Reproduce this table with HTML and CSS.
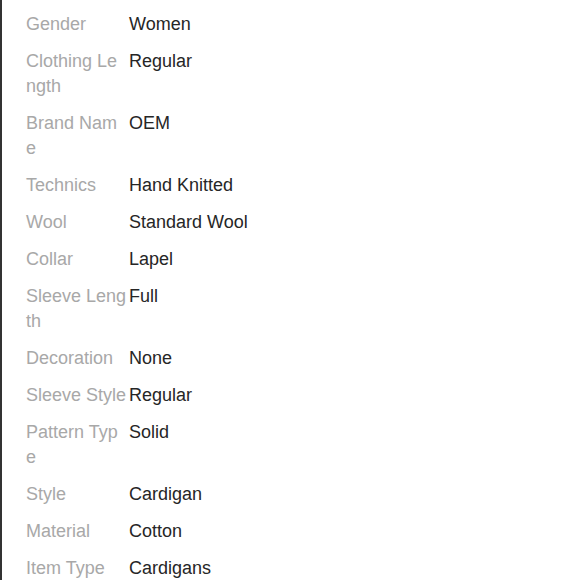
FILE: index.html
```html
<!DOCTYPE html>
<html>
<head>
<meta charset="utf-8">
<link rel="stylesheet" href="styles.css">
</head>
<body>
<div class="panel">
  <div class="row"><div class="label">Gender</div><div class="value">Women</div></div>
  <div class="row"><div class="label">Clothing Length</div><div class="value">Regular</div></div>
  <div class="row"><div class="label">Brand Name</div><div class="value">OEM</div></div>
  <div class="row"><div class="label">Technics</div><div class="value">Hand Knitted</div></div>
  <div class="row"><div class="label">Wool</div><div class="value">Standard Wool</div></div>
  <div class="row"><div class="label">Collar</div><div class="value">Lapel</div></div>
  <div class="row"><div class="label">Sleeve Length</div><div class="value">Full</div></div>
  <div class="row"><div class="label">Decoration</div><div class="value">None</div></div>
  <div class="row"><div class="label">Sleeve Style</div><div class="value">Regular</div></div>
  <div class="row"><div class="label">Pattern Type</div><div class="value">Solid</div></div>
  <div class="row"><div class="label">Style</div><div class="value">Cardigan</div></div>
  <div class="row"><div class="label">Material</div><div class="value">Cotton</div></div>
  <div class="row"><div class="label">Item Type</div><div class="value">Cardigans</div></div>
</div>
</body>
</html>
```
FILE: styles.css
```css
html, body {
  margin: 0;
  padding: 0;
  background: #ffffff;
  height: 100%;
  overflow: hidden;
}
.panel {
  border-left: 2px solid #333333;
  min-height: 100%;
  box-sizing: border-box;
  padding: 6px 0 0 24px;
  font-family: "Liberation Sans", Arial, sans-serif;
  font-size: 18px;
  line-height: 25px;
}
.row {
  display: flex;
  padding: 6px 0;
}
.label {
  width: 100.5px;
  margin-right: 2.5px;
  flex: none;
  color: #a8a8a8;
  word-break: break-all;
}
.value {
  color: #262626;
}
```
